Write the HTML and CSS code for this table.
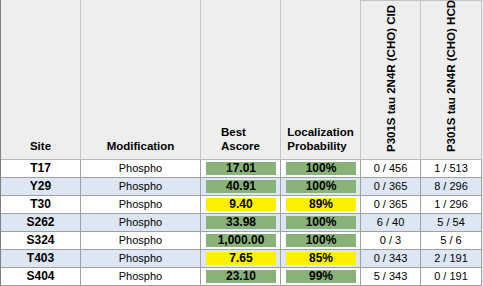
FILE: index.html
```html
<!DOCTYPE html>
<html>
<head>
<meta charset="utf-8">
<link rel="stylesheet" href="styles.css">
</head>
<body>
<div class="grid">
  <div class="hd"><span>Site</span></div>
  <div class="hd"><span>Modification</span></div>
  <div class="hd"><span class="stack">Best<br>Ascore</span></div>
  <div class="hd"><span class="stack">Localization<br>Probability</span></div>
  <div class="hd hd-rot"><span class="rot">P301S tau 2N4R (CHO) CID</span></div>
  <div class="hd hd-rot"><span class="rot">P301S tau 2N4R (CHO) HCD</span></div>

  <div class="row">
    <div class="cell site">T17</div><div class="cell">Phospho</div>
    <div class="cell"><span class="bar good">17.01</span></div>
    <div class="cell"><span class="bar good">100%</span></div>
    <div class="cell">0 / 456</div><div class="cell">1 / 513</div>
  </div>
  <div class="row alt">
    <div class="cell site">Y29</div><div class="cell">Phospho</div>
    <div class="cell"><span class="bar good">40.91</span></div>
    <div class="cell"><span class="bar good">100%</span></div>
    <div class="cell">0 / 365</div><div class="cell">8 / 296</div>
  </div>
  <div class="row">
    <div class="cell site">T30</div><div class="cell">Phospho</div>
    <div class="cell"><span class="bar warn">9.40</span></div>
    <div class="cell"><span class="bar warn">89%</span></div>
    <div class="cell">0 / 365</div><div class="cell">1 / 296</div>
  </div>
  <div class="row alt">
    <div class="cell site">S262</div><div class="cell">Phospho</div>
    <div class="cell"><span class="bar good">33.98</span></div>
    <div class="cell"><span class="bar good">100%</span></div>
    <div class="cell">6 / 40</div><div class="cell">5 / 54</div>
  </div>
  <div class="row">
    <div class="cell site">S324</div><div class="cell">Phospho</div>
    <div class="cell"><span class="bar good">1,000.00</span></div>
    <div class="cell"><span class="bar good">100%</span></div>
    <div class="cell">0 / 3</div><div class="cell">5 / 6</div>
  </div>
  <div class="row alt">
    <div class="cell site">T403</div><div class="cell">Phospho</div>
    <div class="cell"><span class="bar warn">7.65</span></div>
    <div class="cell"><span class="bar warn">85%</span></div>
    <div class="cell">0 / 343</div><div class="cell">2 / 191</div>
  </div>
  <div class="row">
    <div class="cell site">S404</div><div class="cell">Phospho</div>
    <div class="cell"><span class="bar good">23.10</span></div>
    <div class="cell"><span class="bar good">99%</span></div>
    <div class="cell">5 / 343</div><div class="cell">0 / 191</div>
  </div>
</div>
</body>
</html>
```
FILE: styles.css
```css
html, body {
  margin: 0;
  padding: 0;
  background: #eeeeee;
}
.grid {
  display: grid;
  grid-template-columns: 80px 120px 80px 80px 60px 61px;
  grid-template-rows: 160px repeat(7, 18px);
  width: 481px;
  border-left: 1px solid #808080;
  font-family: "Liberation Sans", Arial, sans-serif;
  color: #000;
}
.row { display: contents; }
.hd {
  box-sizing: border-box;
  border-right: 1px solid #c4c4c4;
  border-bottom: 1px solid #b8b8b8;
  background: #eeeeee;
  display: flex;
  flex-direction: column;
  justify-content: flex-end;
  align-items: center;
  padding-bottom: 6px;
  font-weight: bold;
  font-size: 11.5px;
  line-height: 14px;
}
.stack { text-align: left; }
.hd-rot {
  border-top: 1px solid #c4c4c4;
  padding-bottom: 7px;
}
.rot {
  writing-mode: vertical-rl;
  transform: rotate(180deg);
  white-space: nowrap;
  font-size: 11.5px;
  line-height: 14px;
}
.cell {
  box-sizing: border-box;
  border-right: 1px solid #a0a0a0;
  border-bottom: 1px solid #a0a0a0;
  background: #ffffff;
  font-size: 11px;
  line-height: 17px;
  text-align: center;
  white-space: nowrap;
  display: flex;
  align-items: center;
  justify-content: center;
}
.row.alt .cell { background: #dde7f4; }
.site {
  font-weight: bold;
  font-size: 12px;
}
.bar {
  box-sizing: border-box;
  display: block;
  width: 70px;
  height: 13px;
  margin: 1px 4px 2px 5px;
  font-size: 12px;
  font-weight: bold;
  line-height: 13px;
  text-align: center;
}
.bar.good { background: #88b27a; }
.bar.warn { background: #fff000; }
```
